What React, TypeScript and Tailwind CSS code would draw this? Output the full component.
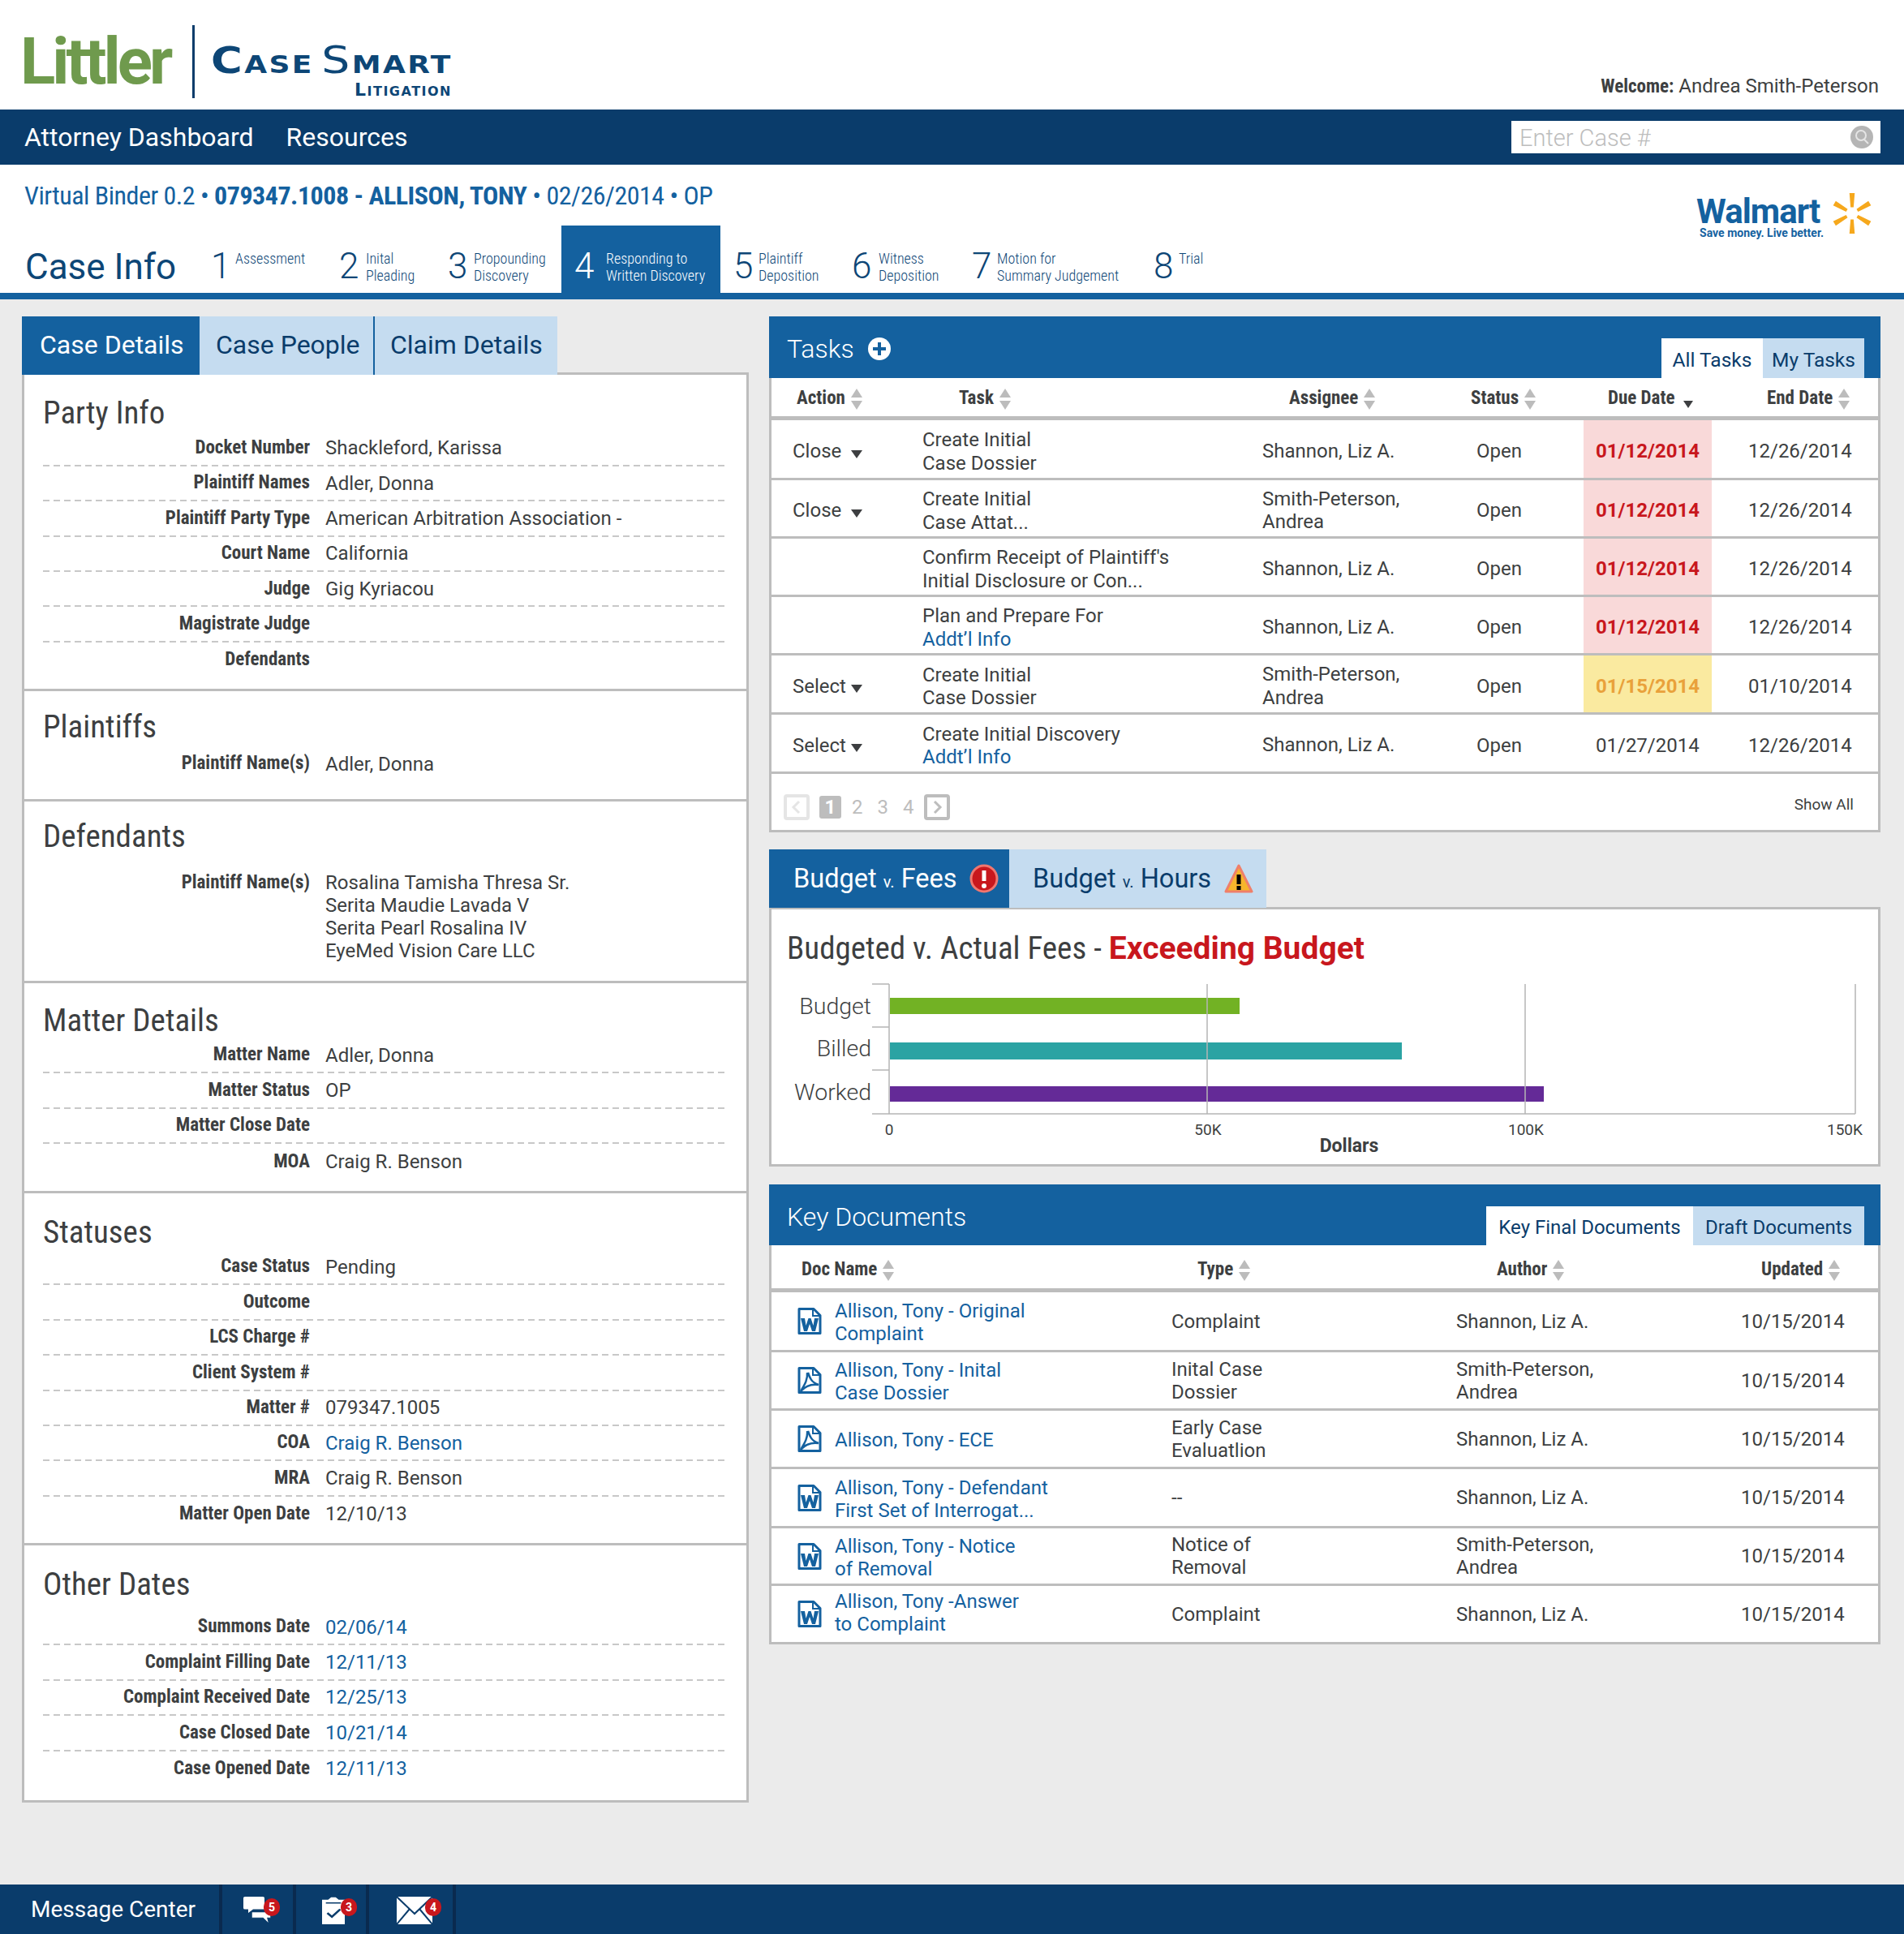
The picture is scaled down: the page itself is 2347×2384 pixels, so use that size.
import React from "react";

const Sort = ({ dir }: { dir?: "down" }) =>
  dir === "down" ? (
    <svg width="16" height="28" viewBox="0 0 16 28" className="ml-2 shrink-0"><path d="M2 16h12l-6 9z" fill="#3d3f41" /></svg>
  ) : (
    <svg width="16" height="28" viewBox="0 0 16 28" className="ml-1.5 shrink-0"><path d="M8 1l7 11H1z" fill="#bcbcbc" /><path d="M1 16h14l-7 11z" fill="#bcbcbc" /></svg>
  );

const Caret = () => (
  <svg width="14" height="10" viewBox="0 0 14 10" className="mt-[6px]"><path d="M0 0h14L7 10z" fill="#3d3f41" /></svg>
);

const Row = ({ label, value, link, last }: { label: string; value?: string; link?: boolean; last?: boolean }) => (
  <div className="flex h-[43.4px] flex-col">
    <div className="flex flex-1 items-center">
      <div className="w-[329px] text-right text-[23px] font-bold text-[#3d3f41] [font-stretch:75%]">{label}</div>
      <div className={`ml-[19px] text-[24px] ${link ? "text-[#14619f]" : "text-[#3d3f41]"}`}>{value}</div>
    </div>
    {!last && <div className="h-[2px] bg-[repeating-linear-gradient(90deg,#c8c8c8_0_8px,transparent_8px_13px)]" />}
  </div>
);

const Heading = ({ children, cls }: { children: string; cls: string }) => (
  <h2 className={`text-[39px] leading-[44px] text-[#3d3f41] [font-stretch:75%] ${cls}`}>{children}</h2>
);

const steps = [
  { n: "1", l: ["Assessment"], w: "w-[158px]", nw: "w-[30px]" },
  { n: "2", l: ["Inital", "Pleading"], w: "w-[134px]", nw: "w-[33px]" },
  { n: "3", l: ["Propounding", "Discovery"], w: "w-[156px]", nw: "w-[32px]" },
  { n: "4", l: ["Responding to", "Written Discovery"], w: "w-[196px]", nw: "w-[39px]", on: true },
  { n: "5", l: ["Plaintiff", "Deposition"], w: "w-[146px]", nw: "w-[31px]" },
  { n: "6", l: ["Witness", "Deposition"], w: "w-[148px]", nw: "w-[33px]" },
  { n: "7", l: ["Motion for", "Summary Judgement"], w: "w-[224px]", nw: "w-[31px]" },
  { n: "8", l: ["Trial"], w: "w-[120px]", nw: "w-[31px]" },
];

const tasks = [
  { a: "Close", t: ["Create Initial", "Case Dossier"], s: ["Shannon, Liz A."], d: "01/12/2014", e: "12/26/2014", k: "r", h: "h-[74px]" },
  { a: "Close", t: ["Create Initial", "Case Attat..."], s: ["Smith-Peterson,", "Andrea"], d: "01/12/2014", e: "12/26/2014", k: "r", h: "h-[72px]" },
  { a: "", t: ["Confirm Receipt of Plaintiff's", "Initial Disclosure or Con..."], s: ["Shannon, Liz A."], d: "01/12/2014", e: "12/26/2014", k: "r", h: "h-[72px]" },
  { a: "", t: ["Plan and Prepare For"], link: "Addt’l Info", s: ["Shannon, Liz A."], d: "01/12/2014", e: "12/26/2014", k: "r", h: "h-[72px]" },
  { a: "Select", t: ["Create Initial", "Case Dossier"], s: ["Smith-Peterson,", "Andrea"], d: "01/15/2014", e: "01/10/2014", k: "y", h: "h-[73px]" },
  { a: "Select", t: ["Create Initial Discovery"], link: "Addt’l Info", s: ["Shannon, Liz A."], d: "01/27/2014", e: "12/26/2014", k: "", h: "h-[73px]" },
];

const docs = [
  { i: "w", n: ["Allison, Tony - Original", "Complaint"], t: ["Complaint"], a: ["Shannon, Liz A."], h: "h-[74px]", p: "pt-[3px]" },
  { i: "p", n: ["Allison, Tony - Inital", "Case Dossier"], t: ["Inital Case", "Dossier"], a: ["Smith-Peterson,", "Andrea"], h: "h-[72px]", p: "pt-[3px]" },
  { i: "p", n: ["Allison, Tony - ECE"], t: ["Early Case", "Evaluatlion"], a: ["Shannon, Liz A."], h: "h-[72px]", p: "pt-[3px]" },
  { i: "w", n: ["Allison, Tony - Defendant", "First Set of Interrogat..."], t: ["--"], a: ["Shannon, Liz A."], h: "h-[73px]", p: "pt-[3px]" },
  { i: "w", n: ["Allison, Tony - Notice", "of Removal"], t: ["Notice of", "Removal"], a: ["Smith-Peterson,", "Andrea"], h: "h-[71px]", p: "pt-[3px]" },
  { i: "w", n: ["Allison, Tony -Answer", "to Complaint"], t: ["Complaint"], a: ["Shannon, Liz A."], h: "h-[72px]", p: "pb-[4px]" },
];

const DocIcon = ({ kind }: { kind: string }) => (
  <svg width="30" height="33" viewBox="0 0 30 33" className="shrink-0">
    <path d="M2 1.500h18l8 8v22H2z" fill="#fff" stroke="#14619f" strokeWidth="3" strokeLinejoin="round" />
    <path d="M19 2v8h8" fill="none" stroke="#14619f" strokeWidth="2" />
    {kind === "w" ? (
      <path d="M4 13h5l1.500 9 3-9h3l3 9L21 13h5l-4 16h-4l-3-9-3 9H8z" fill="#14619f" />
    ) : (
      <path d="M13 7c2 6 4 12 13 15-7-1-15 0-22 8 4-7 9-14 8-23" fill="none" stroke="#14619f" strokeWidth="2.500" />
    )}
  </svg>
);

const Badge = ({ n, cls }: { n: string; cls: string }) => (
  <span className={`absolute top-[17px] flex h-[22px] w-[20px] items-center justify-center rounded-full bg-[#c8171d] text-[14px] font-bold text-white ${cls}`}>{n}</span>
);

export default function App() {
  return (
    <div className="flex min-h-[2384px] flex-col bg-[#ebebeb] font-['Roboto',sans-serif] text-[#3d3f41]">
      {/* top */}
      <header className="flex h-[135px] items-start bg-white">
        <div className="ml-[25px] mt-[36px] w-[189px] whitespace-nowrap text-[80px] font-bold leading-[80px] tracking-[-4px] text-[#6f9a4d]">Littler</div>
        <div className="ml-[23px] mt-[31px] h-[90px] w-[3px] bg-[#0a3c6b]" />
        <div className="ml-[20px] mt-[50px] flex w-[298px] flex-col items-end font-['DejaVu_Sans',sans-serif] font-bold text-[#0d4676]">
          <div className="flex origin-left scale-x-[1.2] items-baseline self-start leading-[48px] tracking-[2px]">
            <span className="text-[44px]">C</span><span className="text-[30px]">ASE</span>
            <span className="ml-[8px] text-[46px] font-normal">S</span><span className="text-[30px]">MART</span>
          </div>
          <div className="-mt-[3px] mr-[1px] text-[22px] leading-[20px] tracking-[1.5px]">L<span className="text-[16px]">ITIGATION</span></div>
        </div>
        <div className="ml-auto mr-[31px] mt-[92px] text-[24px] leading-[28px]"><b className="text-[23px] [font-stretch:75%]">Welcome:</b> <span>Andrea Smith-Peterson</span></div>
      </header>

      <nav className="flex h-[68px] items-center bg-[#0a3c6b] pl-[30px] pr-[29px] text-[32px] text-white">
        <span>Attorney Dashboard</span>
        <span className="ml-[40px]">Resources</span>
        <div className="ml-auto flex h-[40px] w-[455px] items-center justify-between bg-white pl-[10px] pr-[8px]">
          <span className="pt-[3px] text-[29px] font-light text-[#bdbdbd]">Enter Case #</span>
          <svg width="30" height="30" viewBox="0 0 30 30"><circle cx="15" cy="15" r="14" fill="#b5b5b5" /><circle cx="14" cy="13" r="6" fill="none" stroke="#e5e5e5" strokeWidth="2" /><path d="M18 18l5 5" stroke="#e5e5e5" strokeWidth="2" /></svg>
        </div>
      </nav>

      {/* case bar */}
      <section className="bg-white">
        <div className="flex h-[75px] items-start justify-between pl-[30px] pr-[38px]">
          <div className="mt-[18px] text-[32px] leading-[40px] tracking-[-0.5px] text-[#14619f] [font-stretch:75%]">
            Virtual Binder 0.2 • <b className="font-bold">079347.1008 - ALLISON, TONY</b> • 02/26/2014 • OP
          </div>
          <div className="mt-[40px] flex items-start">
            <div className="flex flex-col">
              <span className="text-[42px] font-bold leading-[36px] tracking-[-1px] text-[#14619f] [font-stretch:90%]">Walmart</span>
              <span className="pl-[4px] text-[14px] font-bold leading-[16px] text-[#14619f] [font-stretch:90%]">Save money. Live better.</span>
            </div>
            <svg width="52" height="52" viewBox="-28 -28 56 56" className="-mt-[6px] ml-[9px]">
              {[0, 60, 120, 180, 240, 300].map((a) => (
                <path key={a} d="M-3.500 -27h7l-1.500 19h-4z" fill="#f6a81c" transform={`rotate(${a})`} />
              ))}
            </svg>
          </div>
        </div>
        <div className="flex h-[91px] border-b-[8px] border-[#14619f]">
          <div className="w-[244px] pl-[31px] pt-[25px] text-[44px] leading-[52px] text-[#0d4676]">Case Info</div>
          {steps.map((s) => (
            <div key={s.n} className={`flex ${s.w} pl-[16px] ${s.on ? "mb-[-8px] bg-[#14619f] text-white" : "text-[#0d4676]"}`}>
              <div className={`${s.nw} pt-[24px] text-[44px] font-light leading-[52px]`}>{s.n}</div>
              <div className="whitespace-nowrap pt-[30px] text-[18px] font-light leading-[21px] [font-stretch:75%]">
                {s.l.map((x) => <div key={x}>{x}</div>)}
              </div>
            </div>
          ))}
        </div>
      </section>

      <main className="flex flex-1 items-start pl-[27px] pt-[21px]">
        {/* left */}
        <div className="w-[896px]">
          <div className="flex h-[72px] text-[32px] leading-[71px] [font-stretch:90%]">
            <div className="w-[219px] bg-[#14619f] pl-[22px] text-white">Case Details</div>
            <div className="w-[216px] border-r-2 border-[#14619f] bg-[#c5dcf0] pl-[20px] text-[#0a3c6b]">Case People</div>
            <div className="w-[225px] bg-[#c5dcf0] pl-[19px] text-[#0a3c6b]">Claim Details</div>
          </div>
          <div className="-mt-[3px] border-[3px] border-[#bdbdbd] bg-white px-[23px]">
            <section className="-mx-[23px] h-[390px] border-b-[3px] border-[#bdbdbd] px-[23px] pt-[25px]">
              <Heading cls="mb-[0.5px]">Party Info</Heading>
              <Row label="Docket Number" value="Shackleford, Karissa" />
              <Row label="Plaintiff Names" value="Adler, Donna" />
              <Row label="Plaintiff Party Type" value="American Arbitration Association -" />
              <Row label="Court Name" value="California" />
              <Row label="Judge" value="Gig Kyriacou" />
              <Row label="Magistrate Judge" />
              <Row label="Defendants" last />
            </section>
            <section className="-mx-[23px] h-[136px] border-b-[3px] border-[#bdbdbd] px-[23px] pt-[22px]">
              <Heading cls="mb-[2px]">Plaintiffs</Heading>
              <Row label="Plaintiff Name(s)" value="Adler, Donna" last />
            </section>
            <section className="-mx-[23px] h-[224px] border-b-[3px] border-[#bdbdbd] px-[23px] pt-[21px]">
              <Heading cls="mb-[21px]">Defendants</Heading>
              <div className="flex">
                <div className="w-[329px] text-right text-[23px] font-bold leading-[28px] [font-stretch:75%]">Plaintiff Name(s)</div>
                <div className="ml-[19px] text-[24px] leading-[28px]">
                  <div>Rosalina Tamisha Thresa Sr.</div><div>Serita Maudie Lavada V</div><div>Serita Pearl Rosalina IV</div><div>EyeMed Vision Care LLC</div>
                </div>
              </div>
            </section>
            <section className="-mx-[23px] h-[259px] border-b-[3px] border-[#bdbdbd] px-[23px] pt-[24px]">
              <Heading cls="">Matter Details</Heading>
              <Row label="Matter Name" value="Adler, Donna" />
              <Row label="Matter Status" value="OP" />
              <Row label="Matter Close Date" />
              <Row label="MOA" value="Craig R. Benson" last />
            </section>
            <section className="-mx-[23px] h-[434px] border-b-[3px] border-[#bdbdbd] px-[23px] pt-[26px]">
              <Heading cls="">Statuses</Heading>
              <Row label="Case Status" value="Pending" />
              <Row label="Outcome" />
              <Row label="LCS Charge #" />
              <Row label="Client System #" />
              <Row label="Matter #" value="079347.1005" />
              <Row label="COA" value="Craig R. Benson" link />
              <Row label="MRA" value="Craig R. Benson" />
              <Row label="Matter Open Date" value="12/10/13" last />
            </section>
            <section className="h-[314px] pt-[26px]">
              <Heading cls="mb-[10px]">Other Dates</Heading>
              <Row label="Summons Date" value="02/06/14" link />
              <Row label="Complaint Filling Date" value="12/11/13" link />
              <Row label="Complaint Received Date" value="12/25/13" link />
              <Row label="Case Closed Date" value="10/21/14" link />
              <Row label="Case Opened Date" value="12/11/13" link last />
            </section>
          </div>
        </div>

        {/* right */}
        <div className="ml-[25px] w-[1370px]">
          {/* tasks */}
          <div className="flex h-[76px] items-start justify-between bg-[#14619f] pl-[22px] pr-[20px] text-white">
            <div className="flex h-[80px] items-center text-[32px] font-light">
              Tasks
              <svg width="28" height="28" viewBox="0 0 28 28" className="ml-[17px]"><circle cx="14" cy="14" r="14" fill="#fff" /><path d="M14 6v16M6 14h16" stroke="#14619f" strokeWidth="4" /></svg>
            </div>
            <div className="mt-[27px] flex h-[49px] text-[24.500px] leading-[53px] text-[#0a3c6b]">
              <div className="w-[125px] bg-white text-center">All Tasks</div>
              <div className="w-[125px] bg-[#c5dcf0] text-center">My Tasks</div>
            </div>
          </div>
          <div className="border-x-[3px] border-b-[3px] border-[#bdbdbd] bg-white">
            <div className="grid h-[52px] grid-cols-[200px_407px_224px_169px_196px_1fr] items-center border-b-[5px] border-[#bdbdbd] pl-[31px] pt-[4px] text-[23px] font-bold [font-stretch:75%]">
              <div className="flex items-center">Action<Sort /></div>
              <div className="flex items-center">Task<Sort /></div>
              <div className="flex items-center">Assignee<Sort /></div>
              <div className="flex items-center">Status<Sort /></div>
              <div className="flex items-center">Due Date<Sort dir="down" /></div>
              <div className="flex items-center">End Date<Sort /></div>
            </div>
            {tasks.map((t, i) => (
              <div key={i} className={`grid ${t.h} grid-cols-[160px_419px_264px_132px_158px_1fr] items-center border-b-[3px] border-[#bdbdbd] pl-[26px] text-[24px] leading-[28.500px]`}>
                <div className="flex items-center pt-[6px]">
                  <span className="w-[72px]">{t.a}</span>{t.a && <Caret />}
                </div>
                <div className="pt-[6px]">
                  {t.t.map((x) => <div key={x}>{x}</div>)}
                  {t.link && <div className="text-[#14619f]">{t.link}</div>}
                </div>
                <div className="pt-[5px]">{t.s.map((x) => <div key={x}>{x}</div>)}</div>
                <div className="pt-[6px]">Open</div>
                <div className={`flex h-full items-center pl-[15px] pt-[6px] ${t.k === "r" ? "bg-[#f9d9d9] font-bold text-[#c8171d]" : t.k === "y" ? "bg-[#faeaa0] font-bold text-[#e9a13b]" : ""}`}>{t.d}</div>
                <div className="pl-[45px] pt-[6px]">{t.e}</div>
              </div>
            ))}
            <div className="flex h-[69px] items-center pl-[15px] pr-[30px] pt-[12px] text-[24px] text-[#bdbdbd]">
              <svg width="32" height="32" viewBox="0 0 32 32"><rect x="2" y="2" width="28" height="28" rx="2" fill="#fff" stroke="#e5e5e5" strokeWidth="4" /><path d="M19 9l-7 7 7 7" fill="none" stroke="#e5e5e5" strokeWidth="3" /></svg>
              <span className="ml-[12px] flex h-[28px] w-[27px] items-center justify-center rounded-[3px] bg-[#bdbdbd] font-bold text-white">1</span>
              <span className="ml-[13px]">2</span><span className="ml-[18px]">3</span><span className="ml-[18px]">4</span>
              <svg width="32" height="32" viewBox="0 0 32 32" className="ml-[12px]"><rect x="2" y="2" width="28" height="28" rx="2" fill="#fff" stroke="#bdbdbd" strokeWidth="4" /><path d="M13 9l7 7-7 7" fill="none" stroke="#bdbdbd" strokeWidth="3" /></svg>
              <span className="-mt-[4px] ml-auto text-[19px] text-[#3d3f41]">Show All</span>
            </div>
          </div>

          {/* budget */}
          <div className="mt-[21px] flex h-[72px] text-[32.500px] [font-stretch:90%]">
            <div className="flex w-[296px] items-center bg-[#14619f] pl-[30px] text-white">
              <span>Budget <span className="text-[20px]">v.</span> Fees</span>
              <svg width="36" height="36" viewBox="0 0 36 36" className="ml-auto mr-[13px]"><circle cx="18" cy="18" r="16" fill="#c8171d" stroke="#f0766f" strokeWidth="3" /><path d="M18 8v13" stroke="#fff" strokeWidth="5" /><circle cx="18" cy="27" r="3" fill="#fff" /></svg>
            </div>
            <div className="flex w-[317px] items-center bg-[#c5dcf0] pl-[29px] text-[#0a3c6b]">
              <span>Budget <span className="text-[20px]">v.</span> Hours</span>
              <svg width="36" height="36" viewBox="0 0 36 36" className="ml-auto mr-[16px]"><path d="M18 2l16 32H2z" fill="#f7b52c" stroke="#ef7f6a" strokeWidth="3" strokeLinejoin="round" /><path d="M18 13v12" stroke="#000" strokeWidth="5" /><rect x="15.500" y="27" width="5" height="5" fill="#000" /></svg>
            </div>
          </div>
          <div className="-mt-[1px] h-[320px] border-[3px] border-[#bdbdbd] bg-white pl-[19px]">
            <h3 className="mt-[25px] text-[39px] leading-[46px] [font-stretch:75%]">Budgeted v. Actual Fees - <b className="text-[#c8171d] [font-stretch:90%]">Exceeding Budget</b></h3>
            <svg width="1340" height="236" viewBox="970 1196 1340 236" className="mt-[4px] block">
              <g stroke="#b5b5b5" strokeWidth="1.500">
                <path d="M1096 1213v160M2287 1213v160" />
                <path d="M1075 1373H2287M1075 1213h21M1075 1266h21M1075 1319h21" />
              </g>
              <rect x="1097" y="1230" width="431" height="20" fill="#72b224" />
              <rect x="1097" y="1285" width="631" height="21" fill="#2ba3a3" />
              <rect x="1097" y="1339" width="806" height="19" fill="#642a97" />
              <path d="M1488 1213v160M1880 1213v160" stroke="#b5b5b5" strokeWidth="1.500" />
              <g fontSize="28.500" fontWeight="300" fill="#3d3f41" textAnchor="end">
                <text x="1074" y="1250">Budget</text>
                <text x="1074" y="1302">Billed</text>
                <text x="1074" y="1356">Worked</text>
              </g>
              <g fontSize="19" fill="#3d3f41" textAnchor="middle">
                <text x="1096" y="1399">0</text>
                <text x="1489" y="1399">50K</text>
                <text x="1881" y="1399">100K</text>
                <text x="2274" y="1399">150K</text>
              </g>
              <text x="1663" y="1420" fontSize="23" fontWeight="700" fill="#3d3f41" textAnchor="middle">Dollars</text>
            </svg>
          </div>

          {/* docs */}
          <div className="mt-[22px] flex h-[75px] items-start justify-between bg-[#14619f] pl-[22px] pr-[20px] text-white">
            <div className="flex h-[79px] items-center text-[32px] font-light">Key Documents</div>
            <div className="mt-[27px] flex h-[48px] text-[24px] leading-[53px] text-[#0a3c6b]">
              <div className="w-[255px] bg-white text-center">Key Final Documents</div>
              <div className="w-[211px] bg-[#c5dcf0] text-center">Draft Documents</div>
            </div>
          </div>
          <div className="border-x-[3px] border-[#bdbdbd] bg-white">
            <div className="grid h-[58px] grid-cols-[488px_369px_326px_1fr] items-center border-b-[5px] border-[#bdbdbd] pl-[37px] pt-[8px] text-[23px] font-bold [font-stretch:75%]">
              <div className="flex items-center">Doc Name<Sort /></div>
              <div className="flex items-center">Type<Sort /></div>
              <div className="flex items-center">Author<Sort /></div>
              <div className="flex items-center">Updated<Sort /></div>
            </div>
            {docs.map((d, i) => (
              <div key={i} className={`grid ${d.h} grid-cols-[461px_351px_351px_1fr] items-center border-b-[3px] border-[#bdbdbd] pl-[32px] text-[24px] leading-[28px]`}>
                <div className="flex items-center">
                  <DocIcon kind={d.i} />
                  <div className={`ml-[16px] text-[#14619f] ${d.p}`}>{d.n.map((x) => <div key={x}>{x}</div>)}</div>
                </div>
                <div>{d.t.map((x) => <div key={x}>{x}</div>)}</div>
                <div>{d.a.map((x) => <div key={x}>{x}</div>)}</div>
                <div>10/15/2014</div>
              </div>
            ))}
          </div>
        </div>
      </main>

      <footer className="flex h-[61px] items-stretch bg-[#0a3c6b] text-white">
        <div className="flex w-[270px] items-center pl-[38px] text-[28px]">Message Center</div>
        <div className="relative flex w-[95px] items-center justify-center border-x-[4px] border-[#0a2a4f]">
          <svg width="34" height="34" viewBox="0 0 34 44" preserveAspectRatio="none" className="mr-[2px] mt-[3px]"><path d="M2 0h22a2 2 0 012 2v18H12l-6 6v-6H2a2 2 0 01-2-2V2a2 2 0 012-2z" fill="#fff" /><path d="M10 24h24v10h-4l2 10-8-10H10z" fill="#fff" stroke="#0a3c6b" strokeWidth="1.500" /></svg>
          <Badge n="5" cls="right-[16px]" />
        </div>
        <div className="relative flex w-[90px] items-center justify-center border-r-[4px] border-[#0a2a4f]">
          <svg width="28" height="34" viewBox="0 0 30 44" preserveAspectRatio="none" className="ml-[6px] mt-[3px]"><path d="M0 5h8l4-4h6l4 4h8v39H0z" fill="#fff" /><path d="M7 26l6 6 11-12" fill="none" stroke="#0a3c6b" strokeWidth="3" /><path d="M5 10h20" stroke="#0a3c6b" strokeWidth="2" /></svg>
          <Badge n="3" cls="right-[11px]" />
        </div>
        <div className="relative flex w-[107px] items-center justify-center border-r-[4px] border-[#0a2a4f]">
          <svg width="44" height="34" viewBox="0 0 44 34" className="ml-[8px] mt-[3px]"><rect width="44" height="34" fill="#fff" /><path d="M0 0l22 21L44 0M0 34l16-19M44 34L28 15" fill="none" stroke="#0a3c6b" strokeWidth="2" /></svg>
          <Badge n="4" cls="right-[14px]" />
        </div>
      </footer>
    </div>
  );
}
